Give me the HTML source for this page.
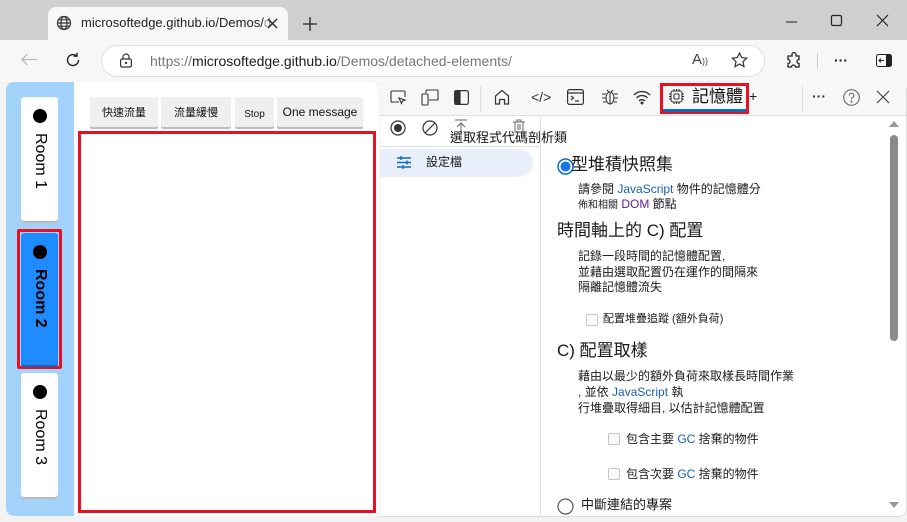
<!DOCTYPE html>
<html><head><meta charset="utf-8"><style>
*{margin:0;padding:0;box-sizing:border-box}
body{width:907px;height:522px;overflow:hidden;background:#cfcfcf;font-family:"Liberation Sans","Noto Sans CJK TC",sans-serif;position:relative;font-size:12px;color:#1a1a1a}
.a{position:absolute}
svg{position:absolute;overflow:visible}
.room{position:absolute;left:21px;width:37px;background:#fff;border-radius:3px;box-shadow:0 2px 0 #bbb}
.room .dot{position:absolute;left:12px;top:12px;width:14px;height:14px;border-radius:50%;background:#000}
.room .t{position:absolute;left:10px;top:36px;writing-mode:vertical-rl;font-size:16px;color:#000}
.btn{position:absolute;top:97px;height:30px;background:#efefef;border-radius:2px;box-shadow:0 2px 0 #bdbdbd;font-size:11px;display:flex;align-items:center;justify-content:center;color:#111}
.cb{position:absolute;width:12px;height:12px;border:1px solid #c4c4c4;border-radius:2px;background:#fafafa}
.txt{position:absolute;font-size:12px;line-height:16px;white-space:nowrap}
.blue{color:#1a5fb4}
</style></head><body>
<div class="a" style="left:0;top:0;width:907px;height:40px;background:#cfcfcf"></div>
<div class="a" style="left:48px;top:7px;width:240px;height:36px;background:#f7f7f7;border-radius:8px 8px 0 0"></div>
<svg style="left:56px;top:15px" width="16" height="16" viewBox="0 0 16 16" fill="none" stroke="#333" stroke-width="1.2"><circle cx="8" cy="8" r="6.5"/><ellipse cx="8" cy="8" rx="3" ry="6.5"/><path d="M1.5 8h13M2.5 4.8h11M2.5 11.2h11"/></svg>
<div class="txt" style="left:81px;top:15px;font-size:13px;color:#222">microsoftedge.github.io/Demos/<span style="color:#999">d</span></div>
<svg style="left:268px;top:19px" width="9" height="9" stroke="#222" stroke-width="1.3"><path d="M0 0L9 9M9 0L0 9"/></svg>
<svg style="left:303px;top:17px" width="14" height="14" stroke="#222" stroke-width="1.3"><path d="M7 0v14M0 7h14"/></svg>
<svg style="left:786px;top:21px" width="11" height="2" stroke="#222"><path d="M0 1h11"/></svg>
<svg style="left:831px;top:15px" width="11" height="11" fill="none" stroke="#222" stroke-width="1.2"><rect x=".5" y=".5" width="10" height="10" rx="1.5"/></svg>
<svg style="left:877px;top:15px" width="11" height="11" stroke="#222" stroke-width="1.2"><path d="M0 0L11 11M11 0L0 11"/></svg>
<div class="a" style="left:0;top:40px;width:907px;height:42px;background:#f7f7f7"></div>
<svg style="left:21px;top:53px" width="16" height="13" fill="none" stroke="#bbb" stroke-width="1.3"><path d="M16 6.5H1M6.5 1L1 6.5 6.5 12"/></svg>
<svg style="left:65px;top:52px" width="16" height="16" fill="none" stroke="#222" stroke-width="1.4"><path d="M13.5 8A5.5 5.5 0 1 1 11.5 3.8M12 0.8v3.4H8.6"/></svg>
<div class="a" style="left:101px;top:45px;width:664px;height:32px;background:#fff;border:1px solid #ddd;border-radius:16px"></div>
<svg style="left:120px;top:53px" width="12" height="15" fill="none" stroke="#333" stroke-width="1.2"><rect x=".6" y="6" width="10.8" height="8" rx="1.5"/><path d="M3 6V4a3 3 0 0 1 6 0v2"/><circle cx="6" cy="10" r=".6" fill="#333"/></svg>
<div class="txt" style="left:150px;top:53px;font-size:14px;color:#777">https://<span style="color:#1a1a1a">microsoftedge.github.io</span>/Demos/detached-elements/</div>
<div class="txt" style="left:692px;top:52px;font-size:15px;color:#444">A<span style="font-size:9px">))</span></div>
<svg style="left:731px;top:52px" width="17" height="16" fill="none" stroke="#333" stroke-width="1.2"><path d="M8.5 1l2.2 4.6 5 .6-3.7 3.4 1 5-4.5-2.5-4.5 2.5 1-5L1.3 6.2l5-.6z"/></svg>
<svg style="left:786px;top:52px" width="16" height="16" fill="none" stroke="#222" stroke-width="1.3"><path d="M6 2.5a2 2 0 0 1 4 0V4h3v3.5a2 2 0 0 0 0 4V15H9.5a2 2 0 0 0-4 0H2v-3.5a2 2 0 0 0 0-4V4h4z"/></svg>
<div class="a" style="left:817px;top:53px;width:1px;height:16px;background:#ccc"></div>
<div class="txt" style="left:834px;top:52px;font-size:14px;font-weight:bold">···</div>
<svg style="left:876px;top:54px" width="16" height="13"><rect x=".5" y=".5" width="15" height="12" rx="2" fill="none" stroke="#222"/><rect x="10" y="1" width="5" height="11" fill="#222"/><path d="M8 6.5H3M5 4.5L3 6.5 5 8.5" stroke="#222" fill="none"/></svg>
<div class="a" style="left:0;top:82px;width:907px;height:440px;background:#f3f3f3"></div>
<div class="a" style="left:6px;top:82px;width:373px;height:434px;background:#fff;border-radius:8px;overflow:hidden">
 <div class="a" style="left:0;top:0;width:68px;height:434px;background:#a3d2fb"></div>
</div>
<div class="room" style="top:97px;height:124px"><div class="dot"></div><div class="t">Room 1</div></div>
<div class="a" style="left:17px;top:229px;width:45px;height:140px;border:3px solid #e81123;border-radius:2px"></div>
<div class="room" style="top:233px;height:132px;background:#1e8bff;box-shadow:0 2px 0 #1565c0"><div class="dot"></div><div class="t" style="font-weight:bold">Room 2</div></div>
<div class="room" style="top:373px;height:124px"><div class="dot"></div><div class="t">Room 3</div></div>
<div class="btn" style="left:90px;width:68px">快速流量</div>
<div class="btn" style="left:161px;width:70px">流量緩慢</div>
<div class="btn" style="left:235px;width:39px;font-size:10px;padding-top:4px">Stop</div>
<div class="btn" style="left:277px;width:86px;font-size:12px">One message</div>
<div class="a" style="left:78px;top:131px;width:298px;height:382px;border:3px solid #e81123"></div>
<div class="a" style="left:380px;top:82px;width:527px;height:435px;background:#fff;border-radius:0 8px 8px 0;border:1px solid #ddd;border-left:none"></div>
<div class="a" style="left:380px;top:82px;width:526px;height:34px;background:#f7f7f7;border-bottom:1px solid #e0e0e0"></div>
<svg style="left:390px;top:90px" width="17" height="16" fill="none" stroke="#333" stroke-width="1.1"><path d="M9 12H2a1 1 0 0 1-1-1V2a1 1 0 0 1 1-1h12a1 1 0 0 1 1 1v5"/><path d="M9 8l6 2-2.5 1 -1 2.5z"/></svg>
<svg style="left:421px;top:89px" width="18" height="17" fill="none" stroke="#333" stroke-width="1.1"><rect x="1" y="5" width="6" height="11" rx="1"/><path d="M5 4V2a1 1 0 0 1 1-1h10a1 1 0 0 1 1 1v8a1 1 0 0 1-1 1H8"/></svg>
<svg style="left:454px;top:90px" width="15" height="15" fill="none" stroke="#333" stroke-width="1.2"><rect x=".6" y=".6" width="13.8" height="13.8" rx="2"/><rect x="1" y="1" width="5" height="13" fill="#333"/></svg>
<div class="a" style="left:480px;top:86px;width:1px;height:26px;background:#ddd"></div>
<svg style="left:494px;top:89px" width="16" height="16" fill="none" stroke="#333" stroke-width="1.2"><path d="M1.5 7L8 1.5 14.5 7V15H10.5V10.5H5.5V15H1.5z"/></svg>
<div class="txt" style="left:531px;top:89px;font-size:14px;color:#333">&lt;/&gt;</div>
<svg style="left:567px;top:89px" width="17" height="16" fill="none" stroke="#333" stroke-width="1.2"><rect x=".6" y=".6" width="15.8" height="14.8" rx="2"/><path d="M1 4h15M4 7l2.5 2L4 11M8 12h4"/></svg>
<svg style="left:601px;top:87px" width="18" height="19" fill="none" stroke="#333" stroke-width="1.1"><ellipse cx="9" cy="11" rx="4" ry="6"/><path d="M5 7H1M13 7h4M5 11H1M13 11h4M5 15H2M13 15h3M6 3l2 2M12 3l-2 2M9 6v11"/></svg>
<svg style="left:633px;top:90px" width="18" height="14" fill="none" stroke="#333" stroke-width="1.4"><path d="M1 5a11 11 0 0 1 16 0M3.5 8a7.5 7.5 0 0 1 11 0M6 11a4 4 0 0 1 6 0"/><circle cx="9" cy="13" r=".8" fill="#333"/></svg>
<div class="a" style="left:660px;top:83px;width:89px;height:31px;border:3px solid #e81123"></div>
<div class="a" style="left:663px;top:109px;width:83px;height:3px;background:#0f6cbd"></div>
<svg style="left:668px;top:88px" width="17" height="17" fill="none" stroke="#333" stroke-width="1.1"><rect x="3" y="3" width="11" height="11" rx="2"/><rect x="6" y="6" width="5" height="5" rx="1"/><path d="M6 1v2M8.5 1v2M11 1v2M6 14v2M8.5 14v2M11 14v2M1 6h2M1 8.5h2M1 11h2M14 6h2M14 8.5h2M14 11h2"/></svg>
<div class="txt" style="left:692px;top:86px;font-size:17px;line-height:21px;color:#111">記憶體</div>
<div class="txt" style="left:749px;top:88px;font-size:14px">+</div>
<div class="a" style="left:802px;top:86px;width:1px;height:26px;background:#ddd"></div>
<div class="txt" style="left:812px;top:88px;font-size:14px;font-weight:bold;color:#333">···</div>
<svg style="left:843px;top:89px" width="17" height="17" fill="none" stroke="#666" stroke-width="1.1"><circle cx="8.5" cy="8.5" r="7.8"/><path d="M6.2 6.5a2.3 2.3 0 1 1 3 2.2c-.6.3-.7.7-.7 1.5"/><circle cx="8.5" cy="12.6" r=".5" fill="#666"/></svg>
<svg style="left:877px;top:91px" width="12" height="12" stroke="#444" stroke-width="1.2"><path d="M0 0L12 12M12 0L0 12"/></svg>
<div class="a" style="left:380px;top:116px;width:161px;height:400px;border-right:1px solid #e0e0e0"></div>
<div class="a" style="left:380px;top:146px;width:161px;height:1px;background:#e0e0e0"></div>
<svg style="left:390px;top:120px" width="16" height="16" fill="none" stroke="#333" stroke-width="1.2"><circle cx="8" cy="8" r="7"/><circle cx="8" cy="8" r="4" fill="#333" stroke="none"/></svg>
<svg style="left:422px;top:120px" width="16" height="16" fill="none" stroke="#333" stroke-width="1.2"><circle cx="8" cy="8" r="7"/><path d="M3 13L13 3"/></svg>
<svg style="left:455px;top:119px" width="12" height="14" fill="none" stroke="#666" stroke-width="1"><path d="M0 1h12M6 4v10M2 8l4-4 4 4"/></svg>
<svg style="left:512px;top:119px" width="14" height="14" fill="none" stroke="#666" stroke-width="1"><path d="M1 3h12M5 3V1h4v2M3 3v10h8V3M6 5v6M8 5v6"/></svg>
<div class="txt" style="left:450px;top:129px;font-size:13px;line-height:17px;color:#111">選取程式代碼剖析類</div>
<div class="a" style="left:380px;top:149px;width:153px;height:28px;background:#e8effb;border-radius:0 14px 14px 0"></div>
<svg style="left:397px;top:156px" width="14" height="13" stroke="#0f6cbd" stroke-width="1.4"><path d="M0 2h14M0 6.5h14M0 11h14M4 0v4M10 4.5v4M6 9v4"/></svg>
<div class="txt" style="left:426px;top:154px;font-size:12px">設定檔</div>
<svg style="left:557px;top:158px" width="18" height="18"><circle cx="8.5" cy="8.5" r="7.5" fill="#fff" stroke="#0f6cbd" stroke-width="1.5"/><circle cx="8.5" cy="8.5" r="5" fill="#1a73e8"/></svg>
<div class="txt" style="left:571px;top:154px;font-size:17px;line-height:21px">型堆積快照集</div>
<div class="txt" style="left:578px;top:181px">請參閱 <span class="blue">JavaScript</span> 物件的記憶體分</div>
<div class="txt" style="left:578px;top:196px"><span style="font-size:10px">佈和相關</span> <span style="color:#6b1f8e">DOM</span> 節點</div>
<div class="txt" style="left:557px;top:220px;font-size:17px;line-height:21px">時間軸上的 C) 配置</div>
<div class="txt" style="left:578px;top:248px">記錄一段時間的記憶體配置,</div>
<div class="txt" style="left:578px;top:264px">並藉由選取配置仍在運作的間隔來</div>
<div class="txt" style="left:578px;top:279px">隔離記憶體流失</div>
<div class="cb" style="left:586px;top:314px"></div>
<div class="txt" style="left:603px;top:311px;font-size:11px">配置堆疊追蹤 (額外負荷)</div>
<div class="txt" style="left:557px;top:340px;font-size:17px;line-height:21px">C) 配置取樣</div>
<div class="txt" style="left:578px;top:368px">藉由以最少的額外負荷來取樣長時間作業</div>
<div class="txt" style="left:578px;top:384px">, 並依 <span class="blue">JavaScript</span> 執</div>
<div class="txt" style="left:578px;top:400px">行堆疊取得細目, 以估計記憶體配置</div>
<div class="cb" style="left:608px;top:433px"></div>
<div class="txt" style="left:626px;top:431px">包含主要 <span class="blue">GC</span> 捨棄的物件</div>
<div class="cb" style="left:608px;top:468px"></div>
<div class="txt" style="left:626px;top:466px">包含次要 <span class="blue">GC</span> 捨棄的物件</div>
<svg style="left:557px;top:498px" width="18" height="18"><circle cx="8.5" cy="8.5" r="7.5" fill="#fff" stroke="#555" stroke-width="1.2"/></svg>
<div class="txt" style="left:581px;top:497px;font-size:13px">中斷連結的專案</div>
<svg style="left:889px;top:121px" width="10" height="6"><path d="M0 6L5 0 10 6z" fill="#999"/></svg>
<div class="a" style="left:890px;top:135px;width:8px;height:206px;background:#8a8a8a;border-radius:4px"></div>
<svg style="left:889px;top:502px" width="10" height="6"><path d="M0 0L5 6 10 0z" fill="#999"/></svg>
</body></html>
